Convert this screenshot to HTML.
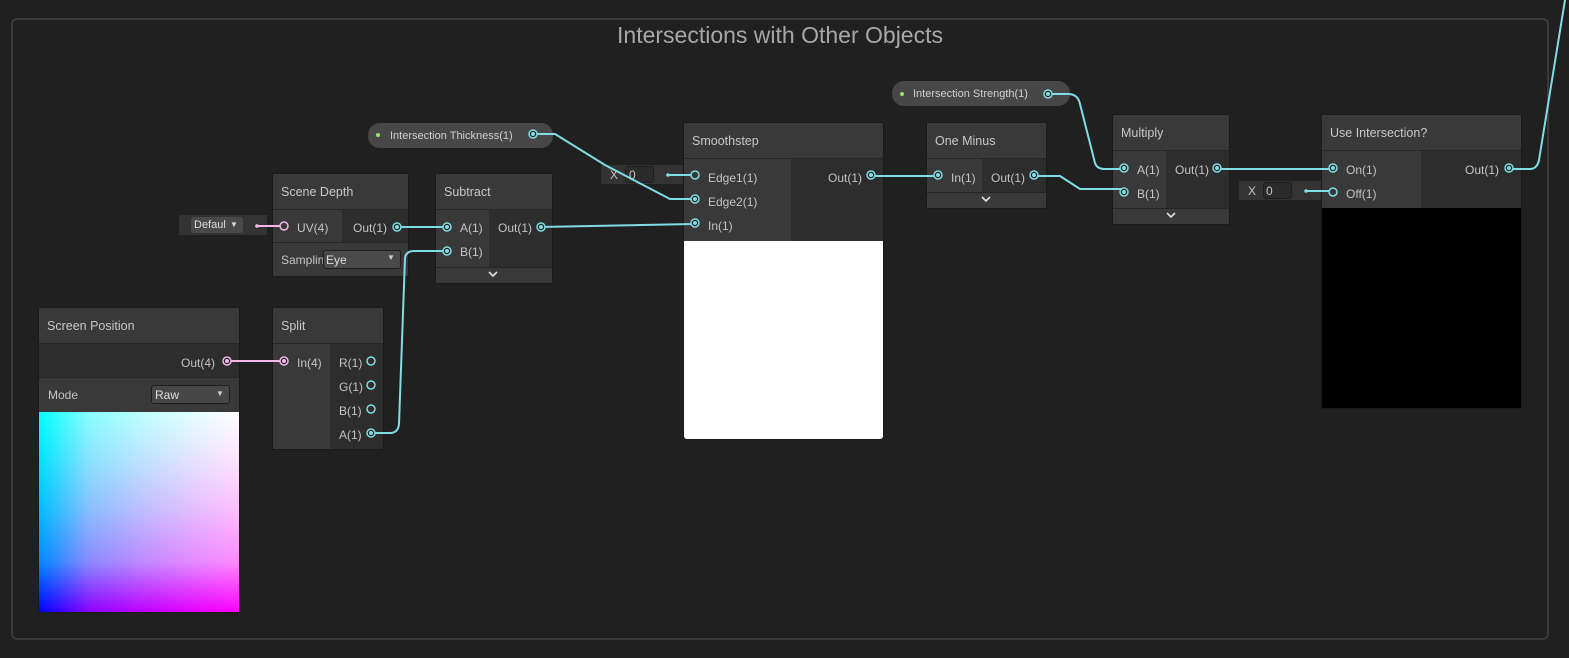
<!DOCTYPE html>
<html><head><meta charset="utf-8"><style>
*{margin:0;padding:0;box-sizing:border-box}
body{width:1569px;height:658px;background:#202020;position:relative;overflow:hidden;font-family:"Liberation Sans",sans-serif;color:#c4c4c4;font-size:12px}
.a{position:absolute}
.hd{background:#393939;border-bottom:1px solid #262626;color:#c8c8c8;font-size:12.5px;padding-left:8px;display:flex;align-items:center}
.in{background:#393939}
.out{background:#2d2d2d}
.node{position:absolute;background:#2d2d2d;border:1px solid #1a1a1a}
.t{position:absolute;white-space:nowrap}
.exp{background:#393939;border-top:1px solid #262626}
.fld{background:#2b2b2b;border:1px solid #1e1e1e;border-radius:3px}
.pill{position:absolute;background:#474747;border-radius:12px;color:#d0d0d0;font-size:11px}
</style></head><body>
<div class="a" style="left:11px;top:18px;width:1538px;height:622px;border:2px solid #3a3a3a;border-radius:6px"></div>
<div class="t" style="left:0;width:1560px;text-align:center;top:22px;font-size:23px;color:#a8a8a8">Intersections with Other Objects</div>

<!-- Scene Depth -->
<div class="node" style="left:272px;top:173px;width:137px;height:104px">
<div class="hd a" style="left:0;top:0;width:135px;height:36px">Scene Depth</div>
<div class="in a" style="left:0;top:36px;width:69px;height:32px"></div>
<div class="a in" style="left:0;top:68px;width:135px;height:34px;border-top:1px solid #262626"></div>
<div class="t" style="left:24px;top:47px">UV(4)</div>
<div class="t" style="left:80px;top:47px">Out(1)</div>
<div class="t" style="left:8px;top:79px">Samplin</div>
<div class="a fld" style="left:50px;top:76px;width:78px;height:19px;background:#4a4a4a"></div>
<div class="t" style="left:53px;top:79px;color:#ddd">Eye</div>
<div class="t" style="left:114px;top:79px;font-size:8px;color:#ccc">▼</div>
</div>
<div class="a" style="left:179px;top:215px;width:88px;height:20px;background:#333"></div>
<div class="a" style="left:191px;top:217px;width:52px;height:16px;background:#494949;border-radius:3px"></div>
<div class="t" style="left:194px;top:219px;color:#ddd;font-size:11px">Defaul</div>
<div class="t" style="left:230px;top:220px;font-size:8px;color:#ddd">▼</div>

<!-- Subtract -->
<div class="node" style="left:435px;top:173px;width:118px;height:111px">
<div class="hd a" style="left:0;top:0;width:116px;height:36px">Subtract</div>
<div class="in a" style="left:0;top:36px;width:53px;height:57px"></div>
<div class="t" style="left:24px;top:47px">A(1)</div>
<div class="t" style="left:24px;top:71px">B(1)</div>
<div class="t" style="left:62px;top:47px">Out(1)</div>
<div class="a exp" style="left:0;top:93px;width:116px;height:16px"></div>
</div>

<!-- Screen Position -->
<div class="node" style="left:38px;top:307px;width:202px;height:306px">
<div class="hd a" style="left:0;top:0;width:200px;height:36px">Screen Position</div>
<div class="t" style="left:142px;top:48px">Out(4)</div>
<div class="a in" style="left:0;top:69px;width:200px;height:35px;border-top:1px solid #262626"></div>
<div class="t" style="left:9px;top:80px">Mode</div>
<div class="a fld" style="left:112px;top:77px;width:79px;height:19px;background:#474747"></div>
<div class="t" style="left:116px;top:80px;color:#ddd">Raw</div>
<div class="t" style="left:177px;top:81px;font-size:8px;color:#ccc">▼</div>
<div class="a" style="left:0;top:104px;width:200px;height:200px;background:linear-gradient(to right,rgb(0,0,255),rgb(137,0,255) 25%,rgb(188,0,255) 50%,rgb(225,0,255) 75%,rgb(255,0,255))">
<div class="a" style="left:0;top:0;width:200px;height:200px;background:linear-gradient(to bottom,rgb(0,255,0),rgb(0,225,0) 25%,rgb(0,188,0) 50%,rgb(0,137,0) 75%,rgb(0,0,0));mix-blend-mode:screen"></div>
</div>
</div>

<!-- Split -->
<div class="node" style="left:272px;top:307px;width:112px;height:143px">
<div class="hd a" style="left:0;top:0;width:110px;height:36px">Split</div>
<div class="in a" style="left:0;top:36px;width:57px;height:105px"></div>
<div class="t" style="left:24px;top:48px">In(4)</div>
<div class="t" style="left:66px;top:48px">R(1)</div>
<div class="t" style="left:66px;top:72px">G(1)</div>
<div class="t" style="left:66px;top:96px">B(1)</div>
<div class="t" style="left:66px;top:120px">A(1)</div>
</div>

<!-- Pills -->
<div class="pill" style="left:368px;top:123px;width:185px;height:25px"><span class="t" style="left:22px;top:7px">Intersection Thickness(1)</span></div>
<div class="pill" style="left:892px;top:81px;width:178px;height:25px"><span class="t" style="left:21px;top:7px">Intersection Strength(1)</span></div>

<!-- Smoothstep -->
<div class="node" style="left:683px;top:122px;width:201px;height:318px">
<div class="hd a" style="left:0;top:0;width:199px;height:36px">Smoothstep</div>
<div class="in a" style="left:0;top:36px;width:107px;height:82px"></div>
<div class="t" style="left:24px;top:48px">Edge1(1)</div>
<div class="t" style="left:24px;top:72px">Edge2(1)</div>
<div class="t" style="left:24px;top:96px">In(1)</div>
<div class="t" style="left:144px;top:48px">Out(1)</div>
<div class="a" style="left:0;top:118px;width:199px;height:198px;background:#fff;border-radius:0 0 3px 3px"></div>
</div>
<div class="a" style="left:601px;top:165px;width:82px;height:19px;background:#333"></div>
<div class="t" style="left:610px;top:168px;font-size:12px">X</div>
<div class="a fld" style="left:625px;top:166px;width:29px;height:17px"></div>
<div class="t" style="left:629px;top:168px">0</div>

<!-- One Minus -->
<div class="node" style="left:926px;top:122px;width:121px;height:87px">
<div class="hd a" style="left:0;top:0;width:119px;height:36px">One Minus</div>
<div class="in a" style="left:0;top:36px;width:55px;height:33px"></div>
<div class="t" style="left:24px;top:48px">In(1)</div>
<div class="t" style="left:64px;top:48px">Out(1)</div>
<div class="a exp" style="left:0;top:69px;width:119px;height:16px"></div>
</div>

<!-- Multiply -->
<div class="node" style="left:1112px;top:114px;width:118px;height:111px">
<div class="hd a" style="left:0;top:0;width:116px;height:36px">Multiply</div>
<div class="in a" style="left:0;top:36px;width:53px;height:57px"></div>
<div class="t" style="left:24px;top:48px">A(1)</div>
<div class="t" style="left:24px;top:72px">B(1)</div>
<div class="t" style="left:62px;top:48px">Out(1)</div>
<div class="a exp" style="left:0;top:93px;width:116px;height:16px"></div>
</div>

<!-- Use Intersection -->
<div class="node" style="left:1321px;top:114px;width:201px;height:295px">
<div class="hd a" style="left:0;top:0;width:199px;height:36px">Use Intersection?</div>
<div class="in a" style="left:0;top:36px;width:99px;height:57px"></div>
<div class="t" style="left:24px;top:48px">On(1)</div>
<div class="t" style="left:24px;top:72px">Off(1)</div>
<div class="t" style="left:143px;top:48px">Out(1)</div>
<div class="a" style="left:0;top:93px;width:199px;height:200px;background:#000"></div>
</div>
<div class="a" style="left:1239px;top:181px;width:82px;height:19px;background:#333"></div>
<div class="t" style="left:1248px;top:184px;font-size:12px">X</div>
<div class="a fld" style="left:1263px;top:182px;width:29px;height:17px"></div>
<div class="t" style="left:1266px;top:184px">0</div>

<svg class="a" style="left:0;top:0" width="1569" height="658">
<g fill="none" stroke="#7fdde3" stroke-width="2">
<path d="M397 227 H445"/>
<path d="M541 227 Q600 226 694 224"/>
<path d="M533 134 H555 L605 165 L670 199 H694"/>
<path d="M871 176 H937"/>
<path d="M1034 176 H1060 L1080 189 H1123"/>
<path d="M1048 94 H1068 Q1078 94 1080 104 L1095 163 Q1097 169 1105 169 H1123"/>
<path d="M1217 169 H1332"/>
<path d="M1509 169 H1530 Q1537 169 1539 160 L1565 0"/>
<path d="M372 433 H390 Q398 433 399 424 L405 258 Q406 251 414 251 H446"/>
<path d="M668 175 H694"/>
<path d="M1306 191 H1332"/>
</g>
<path d="M227 361 H283" stroke="#f3b8e8" stroke-width="2"/>
<path d="M257 226 H283" stroke="#f3b8e8" stroke-width="2"/>
<g fill="#202020" stroke="#7fdde3" stroke-width="1.5">
<circle cx="397" cy="227" r="4"/><circle cx="447" cy="227" r="4"/><circle cx="447" cy="251" r="4"/><circle cx="541" cy="227" r="4"/>
<circle cx="533" cy="134" r="4"/><circle cx="1048" cy="94" r="4"/>
<circle cx="695" cy="199" r="4"/><circle cx="695" cy="223" r="4"/><circle cx="871" cy="175" r="4"/>
<circle cx="938" cy="175" r="4"/><circle cx="1034" cy="175" r="4"/>
<circle cx="1124" cy="168" r="4"/><circle cx="1124" cy="192" r="4"/><circle cx="1217" cy="168" r="4"/>
<circle cx="1333" cy="168" r="4"/><circle cx="1509" cy="168" r="4"/>
<circle cx="371" cy="433" r="4"/>
</g>
<g fill="none" stroke="#7fdde3" stroke-width="1.5">
<circle cx="371" cy="361" r="4"/><circle cx="371" cy="385" r="4"/><circle cx="371" cy="409" r="4"/>
</g>
<g fill="#7fdde3">
<circle cx="397" cy="227" r="2"/><circle cx="447" cy="227" r="2"/><circle cx="447" cy="251" r="2"/><circle cx="541" cy="227" r="2"/>
<circle cx="533" cy="134" r="2"/><circle cx="1048" cy="94" r="2"/>
<circle cx="695" cy="199" r="2"/><circle cx="695" cy="223" r="2"/><circle cx="871" cy="175" r="2"/>
<circle cx="938" cy="175" r="2"/><circle cx="1034" cy="175" r="2"/>
<circle cx="1124" cy="168" r="2"/><circle cx="1124" cy="192" r="2"/><circle cx="1217" cy="168" r="2"/>
<circle cx="1333" cy="168" r="2"/><circle cx="1509" cy="168" r="2"/><circle cx="371" cy="433" r="2"/>
<circle cx="668" cy="175" r="1.8"/><circle cx="1306" cy="191" r="1.8"/>
</g>
<circle cx="695" cy="175" r="4" fill="#393939" stroke="#7fdde3" stroke-width="1.5"/>
<circle cx="1333" cy="192" r="4" fill="#393939" stroke="#7fdde3" stroke-width="1.5"/>
<circle cx="378" cy="135" r="2" fill="#9be06a"/><circle cx="902" cy="94" r="2" fill="#9be06a"/>
<g fill="#202020" stroke="#f3b8e8" stroke-width="1.5"><circle cx="227" cy="361" r="4"/><circle cx="284" cy="361" r="4"/></g>
<g fill="#f3b8e8"><circle cx="227" cy="361" r="2"/><circle cx="284" cy="361" r="2"/><circle cx="257" cy="226" r="1.8"/></g>
<circle cx="284" cy="226" r="4" fill="#393939" stroke="#f3b8e8" stroke-width="1.5"/>
<g fill="none" stroke="#e0e0e0" stroke-width="1.6">
<path d="M489 272 l4 4 l4 -4"/><path d="M982 197 l4 4 l4 -4"/><path d="M1167 213 l4 4 l4 -4"/>
</g>
</svg>
</body></html>
